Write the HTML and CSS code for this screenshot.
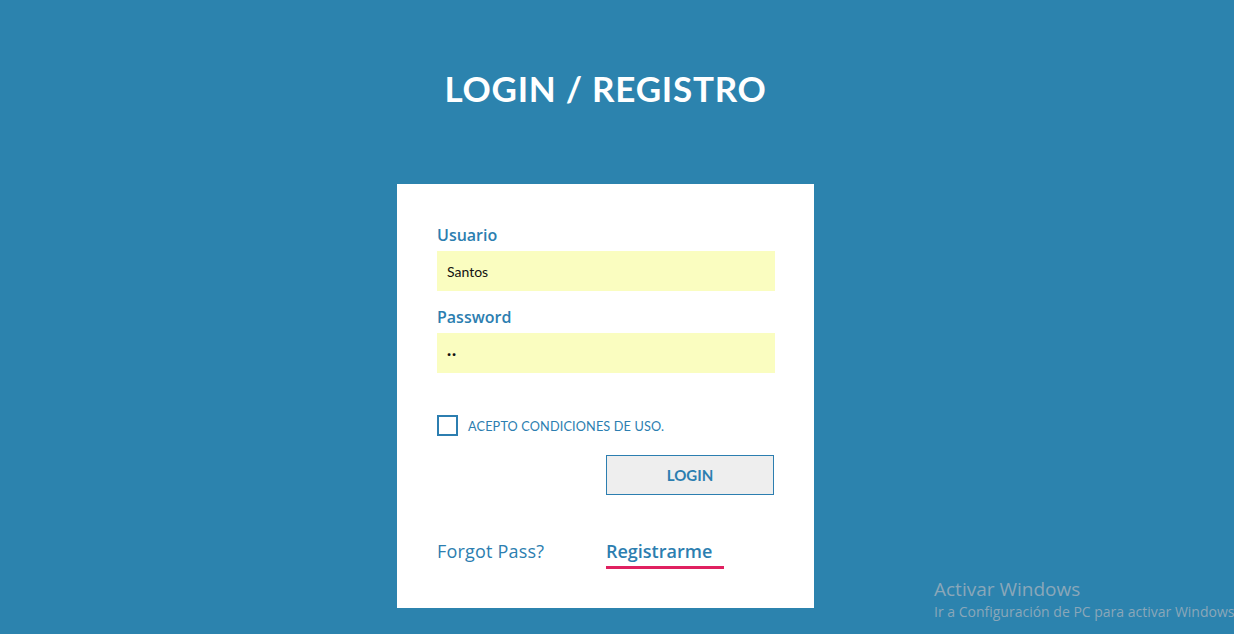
FILE: index.html
```html
<!DOCTYPE html>
<html lang="es">
<head>
<meta charset="utf-8">
<title>Login / Registro</title>
<link rel="stylesheet" href="styles.css">
</head>
<body>
<div class="page">
  <h1 class="title">LOGIN / REGISTRO</h1>
  <form class="card">
    <label class="label" for="user">Usuario</label>
    <input class="field" id="user" type="text" value="Santos">
    <label class="label" for="pass">Password</label>
    <input class="field field-last" id="pass" type="text" value="··">
    <div class="check-row">
      <span class="checkbox"></span>
      <span class="check-text">ACEPTO CONDICIONES DE USO.</span>
    </div>
    <div class="btn-row">
      <button type="button" class="btn">LOGIN</button>
    </div>
    <div class="links">
      <a class="link">Forgot Pass?</a>
      <a class="link active">Registrarme</a>
    </div>
  </form>
</div>
<div class="watermark">
  <div class="wm-title">Activar Windows</div>
  <div class="wm-sub">Ir a Configuración de PC para activar Windows.</div>
</div>
</body>
</html>
```

FILE: styles.css
```css
html, body {
  margin: 0;
  padding: 0;
  height: 100%;
  overflow: hidden;
}
body {
  background: #2c83ae;
  font-family: "Open Sans", "Liberation Sans", sans-serif;
}
.page {
  width: 1211px;
  display: flex;
  flex-direction: column;
  align-items: center;
}
.title {
  margin: 66px 0 0;
  height: 118px;
  font-family: "Lato", sans-serif;
  font-weight: 700;
  font-size: 35px;
  color: #ffffff;
  letter-spacing: 0.75px;
  line-height: 45px;
}
.card {
  width: 417px;
  height: 424px;
  box-sizing: border-box;
  background: #ffffff;
  padding: 41px 39px 0 40px;
  display: flex;
  flex-direction: column;
}
.label {
  color: #2c7eb0;
  font-size: 16px;
  font-weight: 600;
  line-height: 20px;
  height: 26px;
}
.field {
  border: none;
  outline: none;
  background: #fafdc0;
  height: 40px;
  box-sizing: border-box;
  padding: 0 10px;
  font-family: "Lato", sans-serif;
  font-size: 14px;
  color: #111;
  margin: 0 0 16px;
  width: 338px;
}
.field-last {
  margin-bottom: 0;
  font-size: 15px;
  font-weight: 700;
  letter-spacing: 1px;
}
.check-row {
  display: flex;
  align-items: center;
  margin-top: 42px;
  height: 21px;
}
.checkbox {
  width: 21px;
  height: 21px;
  box-sizing: border-box;
  border: 2px solid #2c7eb0;
}
.check-text {
  margin-left: 10px;
  font-family: "Lato", sans-serif;
  font-size: 12.7px;
  color: #2c7eb0;
  letter-spacing: 0.15px;
}
.btn-row {
  display: flex;
  justify-content: flex-end;
  width: 338px;
  margin-top: 19px;
}
.btn {
  width: 168px;
  height: 40px;
  box-sizing: border-box;
  margin-right: 1px;
  background: #eeeeee;
  border: 1px solid #2c7eb0;
  color: #2c7eb0;
  font-family: "Lato", sans-serif;
  font-weight: 700;
  font-size: 15px;
  padding: 0;
}
.links {
  display: flex;
  margin-top: 44px;
}
.link {
  font-size: 18px;
  color: #2c7eb0;
  line-height: 24px;
  padding-bottom: 3px;
}
.link:first-child {
  width: 169px;
  font-weight: 500;
  letter-spacing: 0.2px;
}
.link.active {
  font-weight: 600;
  border-bottom: 3px solid #e02060;
  width: 118px;
}
.watermark {
  position: absolute;
  left: 934px;
  top: 577px;
  white-space: nowrap;
  font-family: "Open Sans", sans-serif;
  color: #8aa7b9;
}
.wm-title {
  font-size: 19px;
  line-height: 25px;
}
.wm-sub {
  font-size: 14px;
  line-height: 20px;
}
```
